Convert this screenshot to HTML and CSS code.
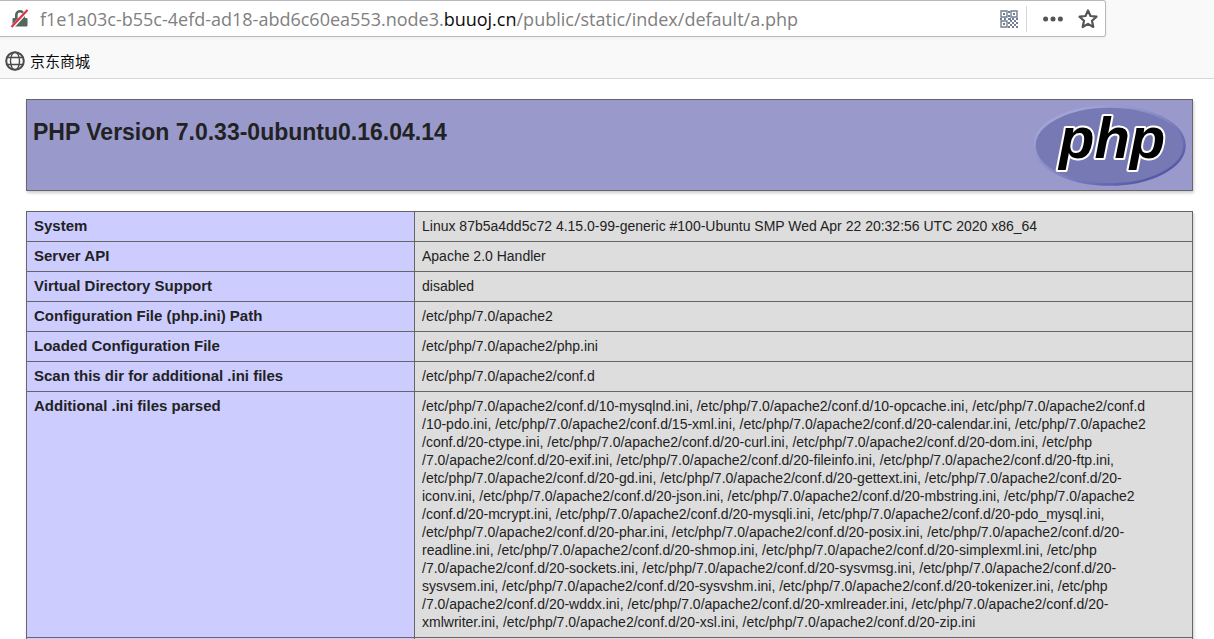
FILE: index.html
```html
<!DOCTYPE html>
<html lang="en">
<head>
<meta charset="utf-8">
<title>phpinfo()</title>
<link rel="stylesheet" href="styles.css">
</head>
<body>
<header class="chrome">
  <div class="address">
    <button class="tool lock" aria-label="Connection is not secure">
      <svg width="20" height="20" viewBox="0 0 20 20"><path d="M6.300 9V6a3.700 3.700 0 0 1 7.400 0v3" fill="none" stroke="#53675d" stroke-width="2.600"/><rect x="2.500" y="9" width="15" height="8.500" rx="1" fill="#53675d"/><path d="M2 18.500 18 1" stroke="#fff" stroke-width="3.600"/><path d="M1.500 18 17.500 1" stroke="#df3049" stroke-width="2.200"/></svg>
    </button>
    <div class="url" role="textbox" aria-label="Address" contenteditable="true" spellcheck="false">f1e1a03c-b55c-4efd-ad18-abd6c60ea553.node3.<span class="domain">buuoj.cn</span>/public/static/index/default/a.php</div>
    <button class="tool qr" aria-label="QR code">
      <svg width="18" height="18" viewBox="0 0 18 18" fill="none" stroke="#737d91" stroke-width="1.400"><path d="M1 1h6v6H1zM11 1h6v6h-6zM1 11h6v6H1z"/><path d="M3 4h2M13 4h2M3 14h2M8 2h2M8 6h2M0 9h2M4 9h2M8 9h3M12 9h2M16 9h2M10 11h2M14 11h2M8 13h2M12 13h2M16 13h2M10 15h2M14 15h2M8 17h2M12 17h2M16 17h2" stroke-width="2"/></svg>
    </button>
    <button class="tool dots" aria-label="Page actions">
      <svg width="20" height="6" viewBox="0 0 20 6" fill="#555"><circle cx="2.600" cy="3" r="2.500"/><circle cx="10" cy="3" r="2.500"/><circle cx="17.400" cy="3" r="2.500"/></svg>
    </button>
    <button class="tool" aria-label="Bookmark this page">
      <svg width="20" height="20" viewBox="0 0 20 20"><path d="m10 1.400 2.500 5.600 6 .7-4.500 4.100 1.300 6.200-5.300-3.100L4.700 18 6 11.800 1.500 7.700l6-.7z" fill="none" stroke="#555" stroke-width="2.200" stroke-linejoin="round"/></svg>
    </button>
  </div>
  <nav class="bookmarks">
    <a class="bookmark" href="#">
      <svg width="20" height="20" viewBox="0 0 20 20" fill="none" stroke="#4b4b4b"><circle cx="10" cy="10" r="8.800" stroke-width="2"/><ellipse cx="10" cy="10" rx="4.500" ry="8.800" stroke-width="1.400"/><path d="M2 6.500h16M2 13.500h16" stroke-width="1.400"/></svg>
      <span>京东商城</span>
    </a>
  </nav>
</header>
<main class="info">
  <section class="banner">
    <h1>PHP Version 7.0.33-0ubuntu0.16.04.14</h1>
    <svg class="logo" width="153" height="82" viewBox="0 0 153 82" role="img" aria-label="PHP logo">
      <defs>
        <linearGradient id="rim" x1="0" y1="0" x2="1" y2="1"><stop offset="0" stop-color="#aeb2de"/><stop offset=".5" stop-color="#8587c3"/><stop offset="1" stop-color="#45459a"/></linearGradient>
      </defs>
      <ellipse cx="75.500" cy="40.500" rx="75" ry="39" fill="#7779b4" stroke="url(#rim)" stroke-width="2.500"/>
      <text class="logo-text" x="25" y="53">php</text>
    </svg>
  </section>
  <table class="facts">
    <tbody>
      <tr><th scope="row">System</th><td>Linux 87b5a4dd5c72 4.15.0-99-generic #100-Ubuntu SMP Wed Apr 22 20:32:56 UTC 2020 x86_64</td></tr>
      <tr><th scope="row">Server API</th><td>Apache 2.0 Handler</td></tr>
      <tr><th scope="row">Virtual Directory Support</th><td>disabled</td></tr>
      <tr><th scope="row">Configuration File (php.ini) Path</th><td>/etc/php/7.0/apache2</td></tr>
      <tr><th scope="row">Loaded Configuration File</th><td>/etc/php/7.0/apache2/php.ini</td></tr>
      <tr><th scope="row">Scan this dir for additional .ini files</th><td>/etc/php/7.0/apache2/conf.d</td></tr>
      <tr><th scope="row">Additional .ini files parsed</th><td>/etc/php/7.0/apache2/conf.d/10-mysqlnd.ini, /etc/php/7.0/apache2/conf.d/10-opcache.ini, /etc/php/7.0/apache2/conf.d<br>/10-pdo.ini, /etc/php/7.0/apache2/conf.d/15-xml.ini, /etc/php/7.0/apache2/conf.d/20-calendar.ini, /etc/php/7.0/apache2<br>/conf.d/20-ctype.ini, /etc/php/7.0/apache2/conf.d/20-curl.ini, /etc/php/7.0/apache2/conf.d/20-dom.ini, /etc/php<br>/7.0/apache2/conf.d/20-exif.ini, /etc/php/7.0/apache2/conf.d/20-fileinfo.ini, /etc/php/7.0/apache2/conf.d/20-ftp.ini,<br>/etc/php/7.0/apache2/conf.d/20-gd.ini, /etc/php/7.0/apache2/conf.d/20-gettext.ini, /etc/php/7.0/apache2/conf.d/20-<br>iconv.ini, /etc/php/7.0/apache2/conf.d/20-json.ini, /etc/php/7.0/apache2/conf.d/20-mbstring.ini, /etc/php/7.0/apache2<br>/conf.d/20-mcrypt.ini, /etc/php/7.0/apache2/conf.d/20-mysqli.ini, /etc/php/7.0/apache2/conf.d/20-pdo_mysql.ini,<br>/etc/php/7.0/apache2/conf.d/20-phar.ini, /etc/php/7.0/apache2/conf.d/20-posix.ini, /etc/php/7.0/apache2/conf.d/20-<br>readline.ini, /etc/php/7.0/apache2/conf.d/20-shmop.ini, /etc/php/7.0/apache2/conf.d/20-simplexml.ini, /etc/php<br>/7.0/apache2/conf.d/20-sockets.ini, /etc/php/7.0/apache2/conf.d/20-sysvmsg.ini, /etc/php/7.0/apache2/conf.d/20-<br>sysvsem.ini, /etc/php/7.0/apache2/conf.d/20-sysvshm.ini, /etc/php/7.0/apache2/conf.d/20-tokenizer.ini, /etc/php<br>/7.0/apache2/conf.d/20-wddx.ini, /etc/php/7.0/apache2/conf.d/20-xmlreader.ini, /etc/php/7.0/apache2/conf.d/20-<br>xmlwriter.ini, /etc/php/7.0/apache2/conf.d/20-xsl.ini, /etc/php/7.0/apache2/conf.d/20-zip.ini</td></tr>
      <tr><th scope="row"></th><td></td></tr>
    </tbody>
  </table>
</main>
</body>
</html>
```
FILE: styles.css
```css
* {
  box-sizing: border-box;
}

body {
  margin: 0;
  height: 100vh;
  overflow: hidden;
  background: #fff;
  color: #222;
  font-family: "Liberation Sans", Arial, sans-serif;
}

.chrome {
  background: #f9f9fa;
  border-bottom: 1px solid #d8d8da;
}

.address {
  display: flex;
  align-items: center;
  height: 37px;
  margin-right: 108px;
  padding: 0 7px 0 10px;
  background: #fff;
  border: 1px solid #b9b9bc;
  border-left: 0;
  border-radius: 0 3px 3px 0;
  box-shadow: 0 1px 4px rgba(0, 0, 0, 0.06);
}

.tool {
  display: flex;
  padding: 0;
  border: 0;
  background: none;
}

.lock {
  margin-right: 10px;
}

.url {
  flex: 1;
  white-space: nowrap;
  color: #808080;
  font: 18px/24px "Open Sans", "Noto Sans", sans-serif;
}

.domain {
  color: #0c0c0d;
}

.qr {
  padding: 4px 8px 4px 0;
  border-right: 1px solid #d7d7db;
}

.dots {
  margin: 0 15px 0 16px;
}

.bookmarks {
  display: flex;
  padding: 14px 5px 7px;
}

.bookmark {
  display: flex;
  align-items: center;
  gap: 5px;
  color: #0c0c0d;
  font: 15px/20px "Noto Sans CJK SC", sans-serif;
  text-decoration: none;
}

.info {
  padding: 20px 21px 20px 26px;
}

.banner {
  display: flex;
  justify-content: space-between;
  align-items: flex-start;
  margin-bottom: 20px;
  padding: 5px 5px 3px 6px;
  background: #9999cc;
  border: 1px solid #666;
  box-shadow: 1px 2px 3px #ccc;
}

.banner h1 {
  margin: 14px 0 0;
  font-size: 23px;
  line-height: 27px;
}

.logo-text {
  font: italic bold 58px "Liberation Sans", sans-serif;
  fill: #000;
  stroke: #fff;
  stroke-width: 4px;
  stroke-linejoin: round;
  paint-order: stroke;
}

.facts {
  width: 100%;
  border-collapse: collapse;
  box-shadow: 1px 2px 3px #ccc;
  font-size: 14px;
  line-height: 18px;
}

.facts th,
.facts td {
  padding: 5px 7px 6px;
  border: 1px solid #666;
  text-align: left;
  vertical-align: top;
}

.facts th {
  width: 388px;
  background: #ccccff;
  font-size: 15px;
}

.facts td {
  background: #ddd;
}
```
